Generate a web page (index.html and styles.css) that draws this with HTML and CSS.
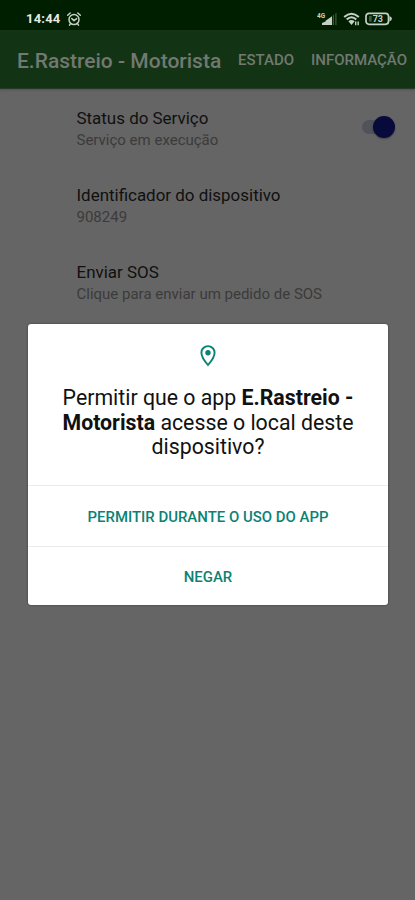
FILE: index.html
```html
<!DOCTYPE html>
<html lang="pt-BR">
<head>
<meta charset="utf-8">
<title>E.Rastreio - Motorista</title>
<link rel="stylesheet" href="styles.css">
</head>
<body>
<div class="screen">
  <header class="status-bar">
    <span class="clock">14:44</span>
    <svg class="alarm" width="16" height="16" viewBox="0 0 16 16" fill="none" stroke="currentColor" stroke-width="1.5" stroke-linecap="round" stroke-linejoin="round"><circle cx="8" cy="8.6" r="5"/><path d="M1.7 4.2 4.2 2M14.3 4.2 11.8 2M5.8 7.6 8 9.6l2.6-2M4.4 12.9l-.9 1.2M11.6 12.9l.9 1.2"/></svg>
    <svg class="signal" width="21" height="14" viewBox="0 0 21 14"><text x="0" y="6" font-size="6.5" font-weight="700" fill="currentColor">4G</text><path d="M5 13V11l3.6-1.5V8.8l3.6-2.5 2.8-2V13z" fill="currentColor"/><path d="M15.8 13V3.4l1.2-.8V13zM18.3 13V1.6l1.2-.8V13z" fill="#3c5b3c"/></svg>
    <svg class="wifi" width="18" height="14" viewBox="0 0 18 14" fill="none" stroke="currentColor" stroke-width="2"><path d="M1.2 5.1Q8.5-1.7 15.8 5.1M3.7 7.5q4.8-4.4 9.6 0"/><path d="M5.4 9.3q3.1-2.4 6.2 0L8.5 13z" fill="currentColor" stroke="none"/><path d="M12.7 9.5v3.7M15.2 9.5v3.7" stroke-width="1.4"/></svg>
    <svg class="battery" width="28" height="14" viewBox="0 0 28 14"><rect x="1" y="1.3" width="22.5" height="11" rx="3" fill="none" stroke="currentColor" stroke-width="1.7"/><path d="M24.5 4q2.4 1 2.4 2.8t-2.4 2.8z" fill="currentColor"/><path d="M4 4h2.7v5.6H4z" fill="#3c5b3c"/><text x="12.8" y="10" text-anchor="middle" font-size="9" font-weight="700" fill="currentColor">73</text></svg>
  </header>
  <nav class="app-bar">
    <h1>E.Rastreio - Motorista</h1>
    <span class="action state">ESTADO</span>
    <span class="action info">INFORMAÇÃO</span>
  </nav>
  <main class="settings">
    <section class="row">
      <div><h2>Status do Serviço</h2><p>Serviço em execução</p></div>
      <div class="switch"><i class="thumb"></i></div>
    </section>
    <section class="row"><div><h2>Identificador do dispositivo</h2><p>908249</p></div></section>
    <section class="row"><div><h2>Enviar SOS</h2><p>Clique para enviar um pedido de SOS</p></div></section>
  </main>
  <div class="dialog">
    <div class="message">
      <svg class="pin" width="16" height="22" viewBox="0 0 16 22"><path d="M8 1.1a6.6 6.6 0 0 0-6.6 6.6C1.4 12.4 8 20 8 20s6.6-7.6 6.6-12.3A6.6 6.6 0 0 0 8 1.1z" fill="none" stroke="currentColor" stroke-width="1.9"/><circle cx="8" cy="7.7" r="2.7" fill="currentColor"/></svg>
      <p>Permitir que o app <b>E.Rastreio -<br>Motorista</b> acesse o local deste<br>dispositivo?</p>
    </div>
    <button class="allow">PERMITIR DURANTE O USO DO APP</button>
    <button class="deny">NEGAR</button>
  </div>
</div>
</body>
</html>
```
FILE: styles.css
```css
* { box-sizing: border-box; }
body { margin: 0; font-family: Roboto, sans-serif; }
h1, h2, p { margin: 0; }
.screen { position: relative; width: 415px; height: 900px; background: #656565; overflow: hidden; }
.status-bar { height: 30px; padding: 8px 22px 0 26px; display: flex; align-items: center; background: #001e00; color: #c6d1c6; }
.clock { font-size: 13px; font-weight: 700; line-height: 22px; letter-spacing: .2px; color: #e4eae4; }
.alarm { margin-left: 5px; }
.signal { margin-left: auto; }
.wifi { margin-left: 5px; }
.battery { margin-left: 4px; }
.app-bar { height: 59px; padding-left: 17px; display: flex; align-items: center; background: #123414; color: #727872; border-bottom: 1px solid #263a27; box-shadow: 0 1px 2px #4448; white-space: nowrap; }
.app-bar h1 { font-size: 21px; font-weight: 500; line-height: 28px; width: 221px; padding-top: 3px; }
.action { font-size: 15px; font-weight: 500; line-height: 20px; padding-top: 1px; }
.state { width: 73px; }
.settings { padding: 0 20px 0 76.5px; }
.row { height: 77px; padding-top: 18px; display: flex; justify-content: space-between; }
.row h2 { font-size: 16.95px; font-weight: 400; line-height: 22px; color: #101010; white-space: nowrap; }
.row p { margin-top: 1px; font-size: 15px; line-height: 21px; color: #3b3b3b; white-space: nowrap; }
.switch { width: 33px; height: 14px; margin-top: 13px; border-radius: 8px; background: #50535a; display: flex; align-items: center; justify-content: flex-end; }
.thumb { width: 22px; height: 22px; border-radius: 50%; background: #090a3c; box-shadow: 0 1px 2px #0005; }
.dialog { position: absolute; left: 28px; top: 324px; width: 360px; height: 281px; background: #fff; border-radius: 3px; box-shadow: 0 0 2px #333; display: flex; flex-direction: column; }
.message { height: 161px; padding-top: 21px; display: flex; flex-direction: column; align-items: center; color: #111; }
.pin { color: #0b8275; }
.message p { margin-top: 19px; font-size: 21.3px; line-height: 24.5px; text-align: center; white-space: nowrap; }
.message b { font-weight: 700; }
button { border: 0; border-top: 1.5px solid #ececec; padding: 1px 0 0; background: none; font: 500 14.95px/20px Roboto, sans-serif; color: #0b8275; }
.allow { height: 61px; }
.deny { height: 59px; }
```
